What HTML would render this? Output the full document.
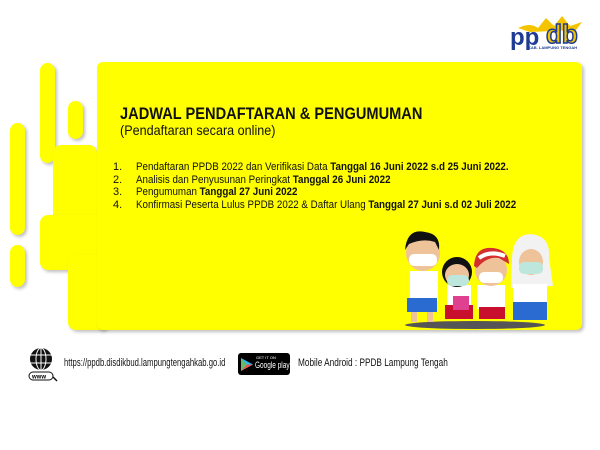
<!DOCTYPE html>
<html><head><meta charset="utf-8"><style>
body{margin:0;width:600px;height:450px;background:#fff;position:relative;overflow:hidden;font-family:"Liberation Sans",sans-serif}
.y{position:absolute;background:#ffff00;border-radius:8px;box-shadow:2px 2px 3px rgba(0,0,0,.25)}
.t{position:absolute;color:#111;white-space:nowrap;transform-origin:left top}
</style></head><body>
<div class="y" style="left:40px;top:63px;width:15px;height:100px"></div>
<div class="y" style="left:68px;top:101px;width:15px;height:38px"></div>
<div class="y" style="left:10px;top:123px;width:15px;height:112px"></div>
<div class="y" style="left:53px;top:145px;width:44px;height:85px;border-radius:8px 8px 0 8px"></div>
<div class="y" style="left:10px;top:245px;width:15px;height:42px"></div>
<div class="y" style="left:40px;top:215px;width:70px;height:55px"></div>
<div class="y" style="left:68px;top:255px;width:40px;height:75px;border-radius:8px 0 8px 8px"></div>
<div class="y" style="left:97px;top:62px;width:485px;height:268px;border-radius:6px"></div>

<div class="t" style="left:120px;top:104px;font-size:17px;font-weight:bold;transform:scaleX(0.86)">JADWAL PENDAFTARAN &amp; PENGUMUMAN</div>
<div class="t" style="left:120px;top:122px;font-size:14px;transform:scaleX(0.9)">(Pendaftaran secara online)</div>
<div class="t" style="left:113px;top:161px;font-size:11px;line-height:12.7px">1.<br>2.<br>3.<br>4.</div>
<div class="t" style="left:136px;top:161px;font-size:11px;line-height:12.7px;transform:scaleX(0.89)">Pendaftaran PPDB 2022 dan Verifikasi Data <b>Tanggal 16 Juni 2022 s.d 25 Juni 2022.</b><br>Analisis dan Penyusunan Peringkat <b>Tanggal 26 Juni 2022</b><br>Pengumuman <b>Tanggal 27 Juni 2022</b><br>Konfirmasi Peserta Lulus PPDB 2022 &amp; Daftar Ulang <b>Tanggal 27 Juni s.d 02 Juli 2022</b></div>

<svg style="position:absolute;left:395px;top:228px" width="160" height="102" viewBox="0 0 160 102">
<ellipse cx="80" cy="97" rx="70" ry="4" fill="#555"/>
<rect x="15" y="43" width="28" height="30" fill="#fff"/><rect x="12" y="70" width="30" height="14" fill="#2a6bd1"/>
<rect x="16" y="84" width="6" height="10" fill="#eec39a"/><rect x="32" y="84" width="6" height="10" fill="#eec39a"/>
<ellipse cx="28" cy="25" rx="17" ry="18" fill="#eec39a"/><path d="M10 22 Q12 0 30 4 Q46 6 44 22 L40 14 Q28 10 14 16Z" fill="#111"/>
<rect x="14" y="26" width="28" height="12" rx="5" fill="#fff"/>
<rect x="52" y="57" width="24" height="22" fill="#fff"/><rect x="50" y="77" width="28" height="14" fill="#c8102e"/>
<ellipse cx="62" cy="44" rx="15" ry="15" fill="#111"/><ellipse cx="62" cy="47" rx="12" ry="11" fill="#eec39a"/>
<rect x="52" y="47" width="22" height="11" rx="5" fill="#bde6dc"/><rect x="58" y="68" width="16" height="14" fill="#e04090"/>
<rect x="82" y="57" width="28" height="24" fill="#fff"/><rect x="84" y="79" width="26" height="12" fill="#c8102e"/>
<ellipse cx="96" cy="42" rx="16" ry="16" fill="#eec39a"/><path d="M79 38 Q80 18 98 20 Q114 22 114 36 L104 30 Q92 28 82 40Z" fill="#d32f2f"/><path d="M84 30 Q95 22 110 28" stroke="#fff" stroke-width="4" fill="none"/>
<rect x="84" y="44" width="24" height="11" rx="5" fill="#fff"/>
<path d="M117 30 Q118 6 136 6 Q156 8 154 30 L158 58 L116 60Z" fill="#f2f2f2"/><rect x="118" y="56" width="34" height="20" fill="#fff"/><rect x="118" y="74" width="34" height="18" fill="#2a6bd1"/>
<ellipse cx="136" cy="34" rx="12" ry="13" fill="#eec39a"/><rect x="124" y="34" width="24" height="12" rx="5" fill="#bde6dc"/>
</svg>

<svg style="position:absolute;left:510px;top:8px" width="80" height="42" viewBox="0 0 80 42">
<path d="M8 20 Q20 14 28 20 L36 10 L44 18 L52 8 L60 18 L72 14 L66 22 L20 24Z" fill="#f5c400"/>
<text x="0" y="37" font-family="Liberation Sans" font-weight="bold" font-size="24" fill="#1f3c94">pp</text>
<text x="36" y="35" font-family="Liberation Sans" font-weight="bold" font-size="26" fill="#f5c400" stroke="#1f3c94" stroke-width="1.5">db</text>
<text x="18" y="41" font-size="4" font-weight="bold" fill="#1f3c94">KAB. LAMPUNG TENGAH</text>
</svg>

<svg style="position:absolute;left:27px;top:346px" width="32" height="36" viewBox="0 0 32 36">
<circle cx="14" cy="13" r="11" fill="#111"/><g stroke="#fff" stroke-width="1" fill="none"><ellipse cx="14" cy="13" rx="5" ry="11"/><line x1="3" y1="9" x2="25" y2="9"/><line x1="3" y1="17" x2="25" y2="17"/><line x1="14" y1="2" x2="14" y2="24"/></g>
<rect x="2" y="26" width="24" height="8" rx="4" fill="#fff" stroke="#111"/><text x="5" y="32.5" font-size="6" font-weight="bold">www</text>
<path d="M26 31 L30 35" stroke="#111" stroke-width="1.5"/>
</svg>
<div class="t" style="left:64px;top:357px;font-size:11px;transform:scaleX(0.7)">https://ppdb.disdikbud.lampungtengahkab.go.id</div>
<div style="position:absolute;left:238px;top:353px;width:52px;height:22px;background:#000;border-radius:3px;white-space:nowrap;overflow:hidden">
<svg style="position:absolute;left:3px;top:5px" width="12" height="13"><path d="M0 0 L12 6.5 L0 13Z" fill="#29b6f6"/><path d="M0 6.5 L12 6.5 L0 13Z" fill="#ef5350"/><path d="M0 0 L6 6.5 L0 13Z" fill="#66bb6a"/></svg>
<div style="position:absolute;left:18px;top:2px;color:#fff;font-size:4px">GET IT ON</div>
<div style="position:absolute;left:17px;top:7px;color:#fff;font-size:9px;transform:scaleX(0.72);transform-origin:left top">Google play</div>
</div>
<div class="t" style="left:298px;top:357px;font-size:11px;transform:scaleX(0.75)">Mobile Android : PPDB Lampung Tengah</div>
</body></html>
